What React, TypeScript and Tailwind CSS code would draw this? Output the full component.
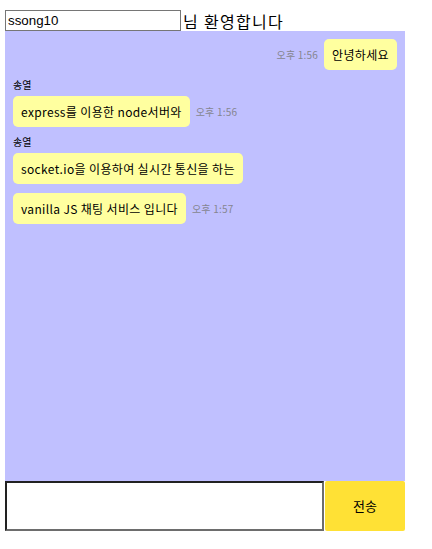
import React from "react";

const KR = { fontFamily: '"Noto Sans CJK KR", "Noto Sans", sans-serif' };

function Time({ t }: { t: string }) {
  return (
    <span className="text-[10px] text-[#858590] leading-none whitespace-nowrap tracking-[0.2px]" style={KR}>
      {t}
    </span>
  );
}

function Bubble({ text }: { text: string }) {
  return (
    <div className="bg-[#ffff9f] rounded-[5px] px-[8px] h-[31px] flex items-center text-[12px] text-black whitespace-nowrap tracking-[0.35px]" style={KR}>
      {text}
    </div>
  );
}

export default function App() {
  return (
    <div className="w-[432px] h-[549px] bg-white" style={KR}>
      <div className="pl-[5px] pt-[10px]">
        <div className="flex items-end h-[21px]">
          <input
            defaultValue="ssong10"
            className="w-[176px] h-[21px] border border-[#767676] px-[2px] text-[13.33px] text-black outline-none"
            style={{ fontFamily: '"Liberation Sans", Arial, sans-serif' }}
          />
          <span className="text-[16px] leading-[20px] text-black ml-[2px] tracking-[1.3px]" style={KR}>님 환영합니다</span>
        </div>
        <div className="w-[400px] h-[450px] bg-[#c0c0ff] pt-[8px] px-[8px] flex flex-col">
          <div className="flex justify-end items-center gap-[6px]">
            <Time t="오후 1:56" />
            <Bubble text="안녕하세요" />
          </div>
          <div className="mt-[9px] text-[10px] leading-[12px] text-black" style={KR}>송열</div>
          <div className="mt-[5px] flex items-center gap-[6px]">
            <Bubble text="express를 이용한 node서버와" />
            <Time t="오후 1:56" />
          </div>
          <div className="mt-[9px] text-[10px] leading-[12px] text-black" style={KR}>송열</div>
          <div className="mt-[5px] flex items-center gap-[6px]">
            <Bubble text="socket.io을 이용하여 실시간 통신을 하는" />
          </div>
          <div className="mt-[9px] flex items-center gap-[6px]">
            <Bubble text="vanilla JS 채팅 서비스 입니다" />
            <Time t="오후 1:57" />
          </div>
        </div>
        <div className="flex w-[400px] h-[50px]">
          <textarea className="w-[319px] h-[50px] border-2 border-t-[#222] border-l-[#222] border-b-[#6d6d6d] border-r-[#6d6d6d] bg-white resize-none outline-none" />
          <button className="ml-[1px] w-[80px] h-[50px] bg-[#ffe135] rounded-[2px] text-[13px] text-black" style={KR}>
            전송
          </button>
        </div>
      </div>
    </div>
  );
}
